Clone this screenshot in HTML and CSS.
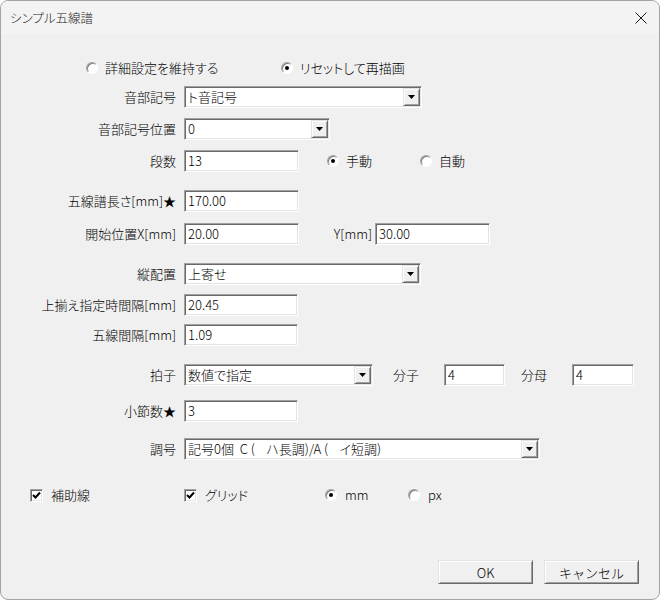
FILE: index.html
```html
<!DOCTYPE html>
<html lang="ja">
<head>
    <meta charset="UTF-8">
    <title>シンプル五線譜</title>
    <link rel="stylesheet" href="styles.css">
</head>
<body>
    <div class="window">
        <div class="titlebar">
            <span class="title">シンプル五線譜</span>
            <svg class="close" width="12" height="12" viewBox="0 0 12 12">
                <path d="M0.5 0.5L11.5 11.5M11.5 0.5L0.5 11.5" stroke="#1a1a1a" stroke-width="1" fill="none"/>
            </svg>
        </div>

        <div class="dialog">
            <div class="row mode-row">
                <label class="opt opt-keep"><span class="radio"></span>詳細設定を維持する</label>
                <label class="opt"><span class="radio checked"></span>リセットして再描画</label>
            </div>

            <div class="row mt-8">
                <span class="label">音部記号</span>
                <div class="combo w-238"><span class="value">ト音記号</span><span class="drop"></span></div>
            </div>

            <div class="row mt-10">
                <span class="label">音部記号位置</span>
                <div class="combo w-146"><span class="value">0</span><span class="drop"></span></div>
            </div>

            <div class="row mt-10">
                <span class="label">段数</span>
                <div class="field w-115">13</div>
                <label class="opt opt-manual"><span class="radio checked"></span>手動</label>
                <label class="opt"><span class="radio"></span>自動</label>
            </div>

            <div class="row mt-18">
                <span class="label">五線譜長さ[mm]★</span>
                <div class="field w-115">170.00</div>
            </div>

            <div class="row mt-11">
                <span class="label">開始位置X[mm]</span>
                <div class="field w-115">20.00</div>
                <span class="side-label side-y">Y[mm]</span>
                <div class="field w-115">30.00</div>
            </div>

            <div class="row mt-18">
                <span class="label">縦配置</span>
                <div class="combo w-237"><span class="value">上寄せ</span><span class="drop"></span></div>
            </div>

            <div class="row mt-9">
                <span class="label">上揃え指定時間隔[mm]</span>
                <div class="field w-114">20.45</div>
            </div>

            <div class="row mt-8">
                <span class="label">五線間隔[mm]</span>
                <div class="field w-114">1.09</div>
            </div>

            <div class="row mt-18">
                <span class="label">拍子</span>
                <div class="combo w-189"><span class="value">数値で指定</span><span class="drop"></span></div>
                <span class="side-label side-num">分子</span>
                <div class="field w-61">4</div>
                <span class="side-label side-den">分母</span>
                <div class="field w-62">4</div>
            </div>

            <div class="row mt-14">
                <span class="label">小節数★</span>
                <div class="field w-114">3</div>
            </div>

            <div class="row mt-16">
                <span class="label">調号</span>
                <div class="combo w-356"><span class="value">記号0個  C (    ハ長調)/A (    イ短調)</span><span class="drop"></span></div>
            </div>

            <div class="row check-row">
                <label class="opt opt-guide"><span class="check"><svg width="9" height="9" viewBox="0 0 9 9"><path d="M1 4L3.5 6.5L8 1.5" stroke="#000" stroke-width="2" fill="none"/></svg></span>補助線</label>
                <label class="opt opt-grid"><span class="check"><svg width="9" height="9" viewBox="0 0 9 9"><path d="M1 4L3.5 6.5L8 1.5" stroke="#000" stroke-width="2" fill="none"/></svg></span>グリッド</label>
                <label class="opt opt-mm"><span class="radio checked"></span>mm</label>
                <label class="opt"><span class="radio"></span>px</label>
            </div>

            <div class="row button-row">
                <button class="btn">OK</button>
                <button class="btn">キャンセル</button>
            </div>
        </div>
    </div>
</body>
</html>
```

FILE: styles.css
```css
* {
    box-sizing: border-box;
}

html,
body {
    margin: 0;
    background: #ffffff;
}

body {
    font-family: "Noto Sans CJK JP", "Liberation Sans", sans-serif;
    font-size: 13px;
    font-weight: 300;
    line-height: 16px;
    color: #000000;
    font-feature-settings: "palt";
}

.window {
    width: 660px;
    height: 600px;
    border: 1px solid #a3a3a3;
    border-radius: 8px;
    overflow: hidden;
    background: #f0f0f0;
    display: flex;
    flex-direction: column;
}

.titlebar {
    height: 33px;
    flex-shrink: 0;
    background: #f3f3f3;
    display: flex;
    align-items: center;
    justify-content: space-between;
    padding: 0 12px 0 9px;
}

.title {
    font-size: 12.5px;
    color: #1b1b1b;
}

.dialog {
    flex: 1;
    padding-top: 24px;
}

.row {
    display: flex;
    align-items: center;
    height: 22px;
}

.mode-row {
    height: 20px;
    padding-left: 85px;
}

.mt-8 { margin-top: 8px; }
.mt-9 { margin-top: 9px; }
.mt-10 { margin-top: 10px; }
.mt-11 { margin-top: 11px; }
.mt-14 { margin-top: 14px; }
.mt-16 { margin-top: 16px; }
.mt-18 { margin-top: 18px; }

.label {
    width: 175px;
    margin-right: 8px;
    text-align: right;
    white-space: nowrap;
}

.side-label {
    white-space: nowrap;
}

.side-y {
    width: 45px;
    margin-left: 31px;
    padding-right: 3px;
    text-align: right;
}

.side-num {
    width: 51px;
    margin-left: 20px;
}

.side-den {
    width: 51px;
    margin-left: 16px;
}

/* sunken edit box */
.field,
.combo {
    height: 22px;
    background: #ffffff;
    border: 1px solid;
    border-color: #a0a0a0 #ffffff #ffffff #a0a0a0;
    box-shadow: inset 1px 1px #696969, inset -1px -1px #e3e3e3;
    display: flex;
    align-items: center;
    white-space: pre;
}

.field {
    padding: 0 3px;
}

.combo .value {
    flex: 1;
    padding-left: 3px;
}

.combo .drop {
    width: 17px;
    height: 18px;
    margin-right: 1px;
    background: #f0f0f0;
    border: 1px solid;
    border-color: #e3e3e3 #696969 #696969 #e3e3e3;
    box-shadow: inset 1px 1px #ffffff, inset -1px -1px #a0a0a0;
    display: flex;
    align-items: center;
    justify-content: center;
}

.combo .drop::after {
    content: "";
    width: 7px;
    height: 4px;
    background: #000000;
    clip-path: polygon(0 0, 100% 0, 50% 100%);
}

.w-61 { width: 61px; }
.w-62 { width: 62px; }
.w-114 { width: 114px; }
.w-115 { width: 115px; }
.w-146 { width: 146px; }
.w-189 { width: 189px; }
.w-237 { width: 237px; }
.w-238 { width: 238px; }
.w-356 { width: 356px; }

/* radio buttons and check boxes */
.opt {
    display: flex;
    align-items: center;
    gap: 7px;
    white-space: nowrap;
}

.opt-keep { width: 195px; }
.opt-manual { width: 93px; margin-left: 28px; }

.radio {
    position: relative;
    width: 12px;
    height: 12px;
    border-radius: 50%;
    background: #ffffff;
    border: 1px solid;
    border-color: #a0a0a0 #ffffff #ffffff #a0a0a0;
    box-shadow: inset 1px 1px #808080;
    flex-shrink: 0;
}

.radio.checked::after {
    content: "";
    position: absolute;
    left: 3px;
    top: 3px;
    width: 4px;
    height: 4px;
    border-radius: 50%;
    background: #000000;
}

.check {
    width: 13px;
    height: 13px;
    background: #ffffff;
    border: 1px solid;
    border-color: #a0a0a0 #ffffff #ffffff #a0a0a0;
    box-shadow: inset 1px 1px #696969, inset -1px -1px #e3e3e3;
    display: flex;
    align-items: center;
    justify-content: center;
    flex-shrink: 0;
}

.check svg {
    display: block;
}

.check-row {
    margin-top: 24px;
    padding-left: 29px;
}

.check-row .opt {
    gap: 8px;
}

.opt-guide { width: 154px; }
.opt-grid { width: 141px; }
.opt-mm { width: 83px; }

/* dialog buttons */
.button-row {
    height: 24px;
    margin-top: 54px;
    justify-content: flex-end;
    gap: 11px;
    padding-right: 20px;
}

.btn {
    width: 95px;
    height: 24px;
    padding: 0;
    font-family: inherit;
    font-size: 13px;
    font-weight: 300;
    color: #000000;
    background: #f0f0f0;
    border: 1px solid;
    border-color: #e3e3e3 #696969 #696969 #e3e3e3;
    box-shadow: inset 1px 1px #ffffff, inset -1px -1px #a0a0a0;
}
```
